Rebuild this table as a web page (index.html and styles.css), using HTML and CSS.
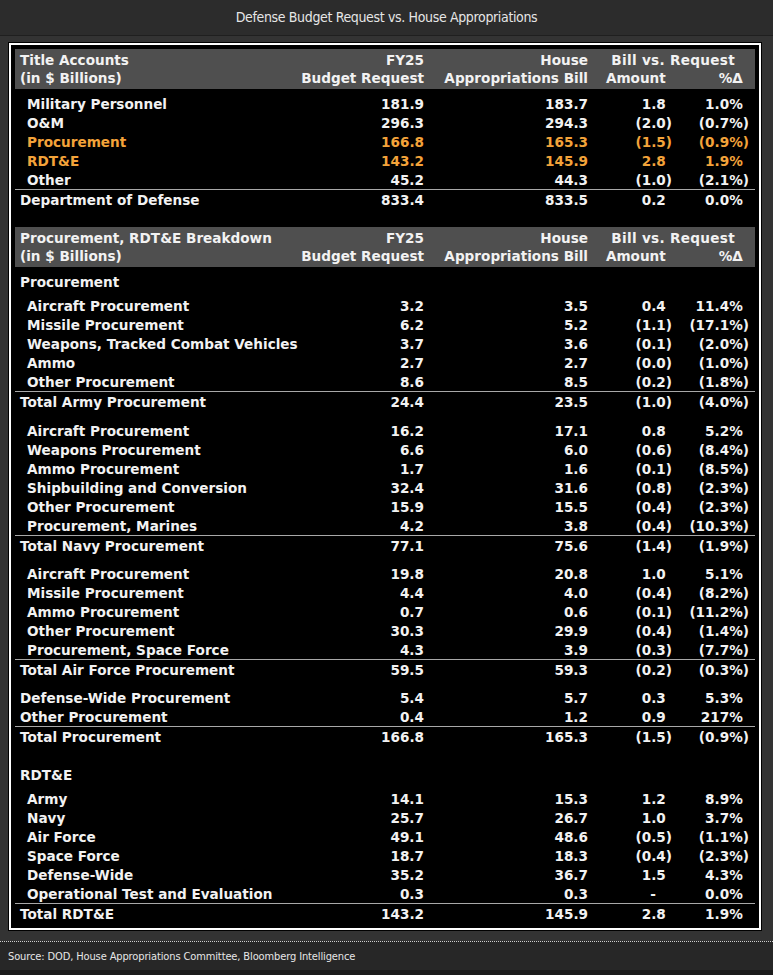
FILE: index.html
```html
<!DOCTYPE html>
<html>
<head>
<meta charset="utf-8">
<link rel="stylesheet" href="styles.css">
</head>
<body>
<div class="title">Defense Budget Request vs. House Appropriations</div>
<div class="body">
  <div class="panel">
    <div class="frame">
      <div class="tbl">
        <div class="hd">
          <div class="row"><span class="lab">Title Accounts</span><span>FY25</span><span>House</span><span class="bvr">Bill vs. Request</span></div>
          <div class="row"><span class="lab">(in $ Billions)</span><span>Budget Request</span><span>Appropriations Bill</span><span class="p">Amount</span><span class="p last">%Δ</span></div>
        </div>
        <div class="row mt5"><span class="lab ind">Military Personnel</span><span>181.9</span><span>183.7</span><span class="p">1.8</span><span class="p last">1.0%</span></div>
        <div class="row"><span class="lab ind">O&amp;M</span><span>296.3</span><span>294.3</span><span>(2.0)</span><span class="last">(0.7%)</span></div>
        <div class="row or"><span class="lab ind">Procurement</span><span>166.8</span><span>165.3</span><span>(1.5)</span><span class="last">(0.9%)</span></div>
        <div class="row or"><span class="lab ind">RDT&amp;E</span><span>143.2</span><span>145.9</span><span class="p">2.8</span><span class="p last">1.9%</span></div>
        <div class="row"><span class="lab ind">Other</span><span>45.2</span><span>44.3</span><span>(1.0)</span><span class="last">(2.1%)</span></div>
        <div class="row tot"><span class="lab">Department of Defense</span><span>833.4</span><span>833.5</span><span class="p">0.2</span><span class="p last">0.0%</span></div>

        <div class="hd mt19">
          <div class="row"><span class="lab">Procurement, RDT&amp;E Breakdown</span><span>FY25</span><span>House</span><span class="bvr">Bill vs. Request</span></div>
          <div class="row"><span class="lab">(in $ Billions)</span><span>Budget Request</span><span>Appropriations Bill</span><span class="p">Amount</span><span class="p last">%Δ</span></div>
        </div>
        <div class="row sec mt5"><span class="lab">Procurement</span></div>
        <div class="row"><span class="lab ind">Aircraft Procurement</span><span>3.2</span><span>3.5</span><span class="p">0.4</span><span class="p last">11.4%</span></div>
        <div class="row"><span class="lab ind">Missile Procurement</span><span>6.2</span><span>5.2</span><span>(1.1)</span><span class="last">(17.1%)</span></div>
        <div class="row"><span class="lab ind">Weapons, Tracked Combat Vehicles</span><span>3.7</span><span>3.6</span><span>(0.1)</span><span class="last">(2.0%)</span></div>
        <div class="row"><span class="lab ind">Ammo</span><span>2.7</span><span>2.7</span><span>(0.0)</span><span class="last">(1.0%)</span></div>
        <div class="row"><span class="lab ind">Other Procurement</span><span>8.6</span><span>8.5</span><span>(0.2)</span><span class="last">(1.8%)</span></div>
        <div class="row tot"><span class="lab">Total Army Procurement</span><span>24.4</span><span>23.5</span><span>(1.0)</span><span class="last">(4.0%)</span></div>

        <div class="row mt11"><span class="lab ind">Aircraft Procurement</span><span>16.2</span><span>17.1</span><span class="p">0.8</span><span class="p last">5.2%</span></div>
        <div class="row"><span class="lab ind">Weapons Procurement</span><span>6.6</span><span>6.0</span><span>(0.6)</span><span class="last">(8.4%)</span></div>
        <div class="row"><span class="lab ind">Ammo Procurement</span><span>1.7</span><span>1.6</span><span>(0.1)</span><span class="last">(8.5%)</span></div>
        <div class="row"><span class="lab ind">Shipbuilding and Conversion</span><span>32.4</span><span>31.6</span><span>(0.8)</span><span class="last">(2.3%)</span></div>
        <div class="row"><span class="lab ind">Other Procurement</span><span>15.9</span><span>15.5</span><span>(0.4)</span><span class="last">(2.3%)</span></div>
        <div class="row"><span class="lab ind">Procurement, Marines</span><span>4.2</span><span>3.8</span><span>(0.4)</span><span class="last">(10.3%)</span></div>
        <div class="row tot"><span class="lab">Total Navy Procurement</span><span>77.1</span><span>75.6</span><span>(1.4)</span><span class="last">(1.9%)</span></div>

        <div class="row mt10"><span class="lab ind">Aircraft Procurement</span><span>19.8</span><span>20.8</span><span class="p">1.0</span><span class="p last">5.1%</span></div>
        <div class="row"><span class="lab ind">Missile Procurement</span><span>4.4</span><span>4.0</span><span>(0.4)</span><span class="last">(8.2%)</span></div>
        <div class="row"><span class="lab ind">Ammo Procurement</span><span>0.7</span><span>0.6</span><span>(0.1)</span><span class="last">(11.2%)</span></div>
        <div class="row"><span class="lab ind">Other Procurement</span><span>30.3</span><span>29.9</span><span>(0.4)</span><span class="last">(1.4%)</span></div>
        <div class="row"><span class="lab ind">Procurement, Space Force</span><span>4.3</span><span>3.9</span><span>(0.3)</span><span class="last">(7.7%)</span></div>
        <div class="row tot"><span class="lab">Total Air Force Procurement</span><span>59.5</span><span>59.3</span><span>(0.2)</span><span class="last">(0.3%)</span></div>

        <div class="row mt10"><span class="lab">Defense-Wide Procurement</span><span>5.4</span><span>5.7</span><span class="p">0.3</span><span class="p last">5.3%</span></div>
        <div class="row"><span class="lab">Other Procurement</span><span>0.4</span><span>1.2</span><span class="p">0.9</span><span class="p last">217%</span></div>
        <div class="row tot"><span class="lab">Total Procurement</span><span>166.8</span><span>165.3</span><span>(1.5)</span><span class="last">(0.9%)</span></div>

        <div class="row sec mt20"><span class="lab">RDT&amp;E</span></div>
        <div class="row"><span class="lab ind">Army</span><span>14.1</span><span>15.3</span><span class="p">1.2</span><span class="p last">8.9%</span></div>
        <div class="row"><span class="lab ind">Navy</span><span>25.7</span><span>26.7</span><span class="p">1.0</span><span class="p last">3.7%</span></div>
        <div class="row"><span class="lab ind">Air Force</span><span>49.1</span><span>48.6</span><span>(0.5)</span><span class="last">(1.1%)</span></div>
        <div class="row"><span class="lab ind">Space Force</span><span>18.7</span><span>18.3</span><span>(0.4)</span><span class="last">(2.3%)</span></div>
        <div class="row"><span class="lab ind">Defense-Wide</span><span>35.2</span><span>36.7</span><span class="p">1.5</span><span class="p last">4.3%</span></div>
        <div class="row"><span class="lab ind">Operational Test and Evaluation</span><span>0.3</span><span>0.3</span><span class="dash">-</span><span class="p last">0.0%</span></div>
        <div class="row tot"><span class="lab">Total RDT&amp;E</span><span>143.2</span><span>145.9</span><span class="p">2.8</span><span class="p last">1.9%</span></div>
      </div>
    </div>
  </div>
</div>
<div class="foot">Source: DOD, House Appropriations Committee, Bloomberg Intelligence</div>
<div class="bottom"></div>
</body>
</html>
```
FILE: styles.css
```css
html, body {
  margin: 0;
  padding: 0;
  background: #1b1b1b;
}
body {
  width: 773px;
  height: 975px;
  overflow: hidden;
}
.title {
  height: 35px;
  line-height: 35px;
  background: #2c2c2c;
  border-bottom: 1px solid #1f1f1f;
  color: #e6e6e6;
  text-align: center;
  font-family: "Liberation Sans Narrow", "DejaVu Sans Condensed", "Liberation Sans", sans-serif;
  font-size: 14px;
  letter-spacing: -0.35px;
}
.body {
  background: #333333;
  padding: 6px 11px 10px 8px;
}
.panel {
  background: #000;
  padding: 1px;
  width: 752px;
  height: 887px;
}
.frame {
  border: 2px solid #ffffff;
  padding: 4px 4px 0 2px;
  height: 887px;
  box-sizing: border-box;
}
.tbl {
  width: 740px;
  margin-left: 2px;
  font-family: "DejaVu Sans", Verdana, sans-serif;
  font-weight: bold;
  font-size: 13.6px;
  color: #f2f2f2;
}
.row {
  display: grid;
  grid-template-columns: 285px 124px 164px 84px 83px;
  height: 19px;
  line-height: 21px;
  box-sizing: border-box;
  white-space: nowrap;
}
.row > span {
  text-align: right;
}
.row > .lab {
  text-align: left;
  padding-left: 5px;
}
.row > .ind {
  padding-left: 12px;
}
.row > .last {
  padding-right: 6px;
}
.p::after {
  content: ")";
  visibility: hidden;
}
.row > .dash {
  padding-right: 16px;
}
.hd {
  background: #4f4f4f;
  padding: 2px 0;
}
.hd .row {
  height: 18px;
  line-height: 18px;
}
.hd .row + .row {
  line-height: 19px;
}
.row > .bvr {
  grid-column: 4 / span 2;
  padding-right: 20px;
  letter-spacing: 0.3px;
}
.sec {
  height: 24px;
}
.or { color: #f3a33a; }
.tot {
  border-top: 1px solid #a8a8a8;
  line-height: 20px;
}
.mt5 { margin-top: 5px; }
.mt10 { margin-top: 10px; }
.mt11 { margin-top: 11px; }
.mt19 { margin-top: 19px; }
.mt20 { margin-top: 20px; }
.foot {
  border-top: 1px dotted #cfcfcf;
  background: #272727;
  height: 28px;
  line-height: 30px;
  padding-left: 8px;
  color: #e6e6e6;
  font-family: "Liberation Sans Narrow", "DejaVu Sans Condensed", "Liberation Sans", sans-serif;
  font-size: 11px;
  letter-spacing: -0.12px;
}
.bottom {
  height: 5px;
  background: #1b1b1b;
}
```
